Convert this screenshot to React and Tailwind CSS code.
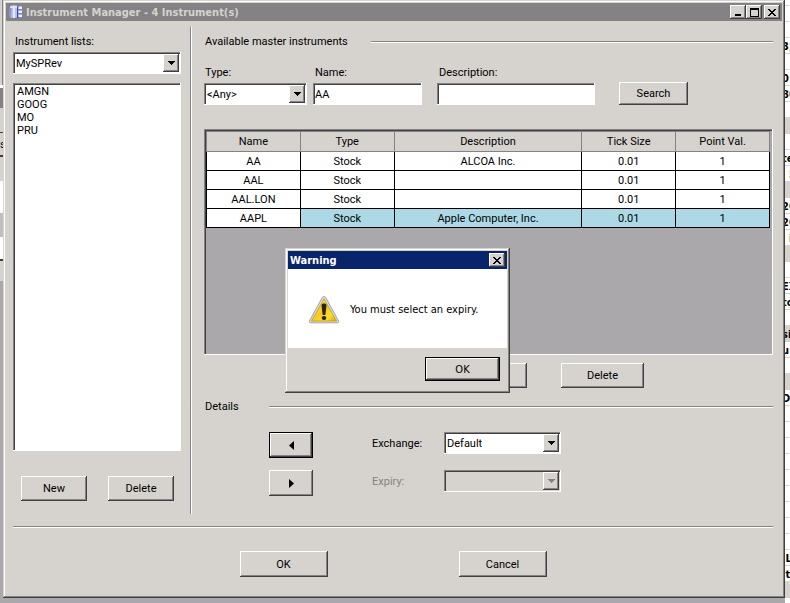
import React, { useState } from 'react';

// classic 3d edges
const RAISED = 'bg-[#d6d3ce] shadow-[inset_-1px_-1px_0_#404040,inset_1px_1px_0_#fff,inset_-2px_-2px_0_#848284]';
const SUNKEN = 'shadow-[inset_-1px_-1px_0_#fff,inset_1px_1px_0_#848284,inset_2px_2px_0_#404040]';
const FOCUSED = 'border border-black bg-[#d6d3ce] shadow-[inset_-1px_-1px_0_#404040,inset_1px_1px_0_#fff,inset_-2px_-2px_0_#848284]';

const instruments = [
    { name: 'AA', type: 'Stock', description: 'ALCOA Inc.', tick: '0.01', point: '1' },
    { name: 'AAL', type: 'Stock', description: '', tick: '0.01', point: '1' },
    { name: 'AAL.LON', type: 'Stock', description: '', tick: '0.01', point: '1' },
    { name: 'AAPL', type: 'Stock', description: 'Apple Computer, Inc.', tick: '0.01', point: '1' }
];

// rows of the sheet that is behind the window, # is a shaded row
const sheetRows = [
    '', '', '3;', '', '0', '80', '', '#', '', 'te', '  5', '#', '20', '20', '  i', '#', '', 'EX', 'to', '',
    '#si', 'u', '', '#', 'D', '', '', '', '', '', '', '', '', '', ' L', ' t', '#'
];

const Button = ({ className, children, focused, ...props }) => (
    <button
        type="button"
        className={`flex items-center justify-center shrink-0 ${focused ? FOCUSED : RAISED} ${className}`}
        {...props}
    >
        {children}
    </button>
);

const Select = ({ id, className, options, disabled }) => (
    <div className={`relative shrink-0 ${className}`}>
        <select
            id={id}
            disabled={disabled}
            className={`block appearance-none w-full h-[22px] pl-[3px] pr-5 outline-none opacity-100 ${SUNKEN} ${disabled ? 'bg-[#d6d3ce]' : 'bg-white'}`}
        >
            {options.map(option => <option key={option}>{option}</option>)}
        </select>
        <span className={`absolute right-[2px] top-[2px] w-4 h-[18px] flex items-center justify-center pointer-events-none ${RAISED}`}>
            <svg width="7" height="4" viewBox="0 0 7 4" shapeRendering="crispEdges">
                <path d="M0 0h7v1H6v1H5v1H4v1H3V3H2V2H1V1H0z" fill={disabled ? '#848284' : '#000'} />
            </svg>
        </span>
    </div>
);

const Line = ({ className }) => (
    <div className={`h-[2px] border-t border-t-[#848284] border-b border-b-white ${className}`}></div>
);

const WarningDialog = ({ onClose }) => (
    <div
        role="dialog"
        aria-label="Warning"
        className="absolute left-[282px] top-[248px] w-[225px] p-[3px] bg-[#d6d3ce] shadow-[inset_-1px_-1px_0_#404040,inset_1px_1px_0_#d6d3ce,inset_-2px_-2px_0_#848284,inset_2px_2px_0_#fff] font-['DejaVu_Sans_Condensed','DejaVu_Sans',sans-serif]"
    >
        <div className="flex items-center justify-between h-[18px] pl-[2px] pr-[2px] bg-[#08246b] text-white">
            <h2 className="font-bold">Warning</h2>
            <Button aria-label="Close" className="w-4 h-[14px]" onClick={onClose}>
                <svg width="8" height="7" viewBox="0 0 8 7" shapeRendering="crispEdges">
                    <path d="M0 0h2v1h1v1h2V1h1V0h2v1H7v1H6v1H5v1h1v1h1v1h1v1H6V6H5V5H3v1H2v1H0V6h1V5h1V4h1V3H2V2H1V1H0z" fill="#000" />
                </svg>
            </Button>
        </div>
        <div className="flex items-center gap-[10px] h-[79px] pt-[2px] pl-5 bg-white">
            <svg width="32" height="29" viewBox="0 0 32 29">
                <defs>
                    <linearGradient id="sign" x1="0" y1="0" x2="1" y2="1">
                        <stop offset="0" stopColor="#f6e58a" />
                        <stop offset="0.5" stopColor="#f5c928" />
                        <stop offset="0.75" stopColor="#fbe02c" />
                        <stop offset="1" stopColor="#dd9a10" />
                    </linearGradient>
                </defs>
                <path d="M16 1.5c.9 0 1.5.5 1.9 1.3L30.6 26c.4 1-.1 1.8-1.100 1.800H2.500c-1 0-1.500-.8-1.100-1.800L14.100 2.800c.4-.8 1-1.300 1.900-1.300z" fill="#d8d8d6" stroke="#a5a5a0" />
                <path d="M16 4L28.500 26h-25z" fill="url(#sign)" stroke="#c99a16" strokeWidth=".8" />
                <path d="M13.500 10.500c0-2.600 5-2.600 5 0l-1.200 9.500h-2.600z" fill="#2b240c" />
                <ellipse cx="16" cy="23" rx="2.300" ry="1.900" fill="#2b240c" />
            </svg>
            <p>You must select an expiry.</p>
        </div>
        <div className="flex justify-end pt-[9px] pr-[7px] pb-[9px]">
            <Button focused className="w-[75px] h-6" onClick={onClose}>OK</Button>
        </div>
    </div>
);

const App = () => {
    const [warning, setWarning] = useState(true);
    const [name, setName] = useState('AA');
    const [description, setDescription] = useState('');

    return (
        <div className="flex min-h-screen overflow-hidden bg-[#aba8ac] text-[11px] leading-[13px] text-black font-[Roboto,Arial,sans-serif]">
            {/* edge of the application at the left */}
            <div className="w-[3px] shrink-0 flex flex-col bg-[#aba8ac]">
                <div className="h-[85px] bg-[#d6d3ce] border-r border-[#848284]"></div>
                <div className="h-[3px] bg-white"></div>
                <div className="h-[20px] bg-[#848284]"></div>
                <div className="h-[25px] bg-[#d6d3ce] border-b border-[#404040]"></div>
                <div className="h-[24px] bg-[#d6d3ce] border-b-2 border-[#404040] overflow-hidden flex items-center">s</div>
                <div className="h-[24px] bg-[#d6d3ce]"></div>
                <div className="h-[32px] bg-white"></div>
                <div className="h-[24px] bg-[#c0bec0]"></div>
                <div className="h-[24px] bg-white border-b-2 border-[#404040]"></div>
                <div className="h-[20px] bg-[#d6d3ce]"></div>
            </div>

            <div className="relative flex-1 min-w-0 mb-[5px] p-[3px] flex flex-col bg-[#d6d3ce] shadow-[inset_-1px_-1px_0_#404040,inset_1px_1px_0_#d6d3ce,inset_-2px_-2px_0_#848284,inset_2px_2px_0_#fff]">
                <div className="flex items-center h-[18px] pl-[3px] pr-[2px] bg-[#848284] text-[#d6d3ce]">
                    <svg width="14" height="14" viewBox="0 0 14 14" className="mr-[3px]">
                        <path d="M1 2l7-1v11.500l-8 .5z" fill="#b9c1f0" />
                        <path d="M1 2h1.500L2 13H0z" fill="#8590d6" />
                        <path d="M4 2h2v11H4z" fill="#e6e9ff" />
                        <path d="M1 1.500C2 .3 7 .3 8.500 1.200V3H1z" fill="#dfe3ff" />
                        <path d="M8 1.500h1.200V13H8z" fill="#3f4a9e" />
                        <path d="M9 1h4v12H9z" fill="#7580c8" />
                        <path d="M9.500 1.500H13V4H9.500zM9.500 5.500H13V8H9.500zM9.500 9.500H13V12H9.500z" fill="#eef0ff" />
                    </svg>
                    <h1 className="flex-1 font-bold font-['DejaVu_Sans_Condensed','DejaVu_Sans',sans-serif] whitespace-nowrap">Instrument Manager - 4 Instrument(s)</h1>
                    <Button aria-label="Minimize" className="w-4 h-[14px]">
                        <svg width="8" height="8" viewBox="0 0 8 8" shapeRendering="crispEdges">
                            <path d="M1 6h6v2H1z" fill="#000" />
                        </svg>
                    </Button>
                    <Button aria-label="Maximize" className="w-4 h-[14px]">
                        <svg width="9" height="9" viewBox="0 0 9 9" shapeRendering="crispEdges">
                            <path d="M0 0h9v9H0zM1 2v6h7V2z" fill="#000" fillRule="evenodd" />
                        </svg>
                    </Button>
                    <Button aria-label="Close" className="w-4 h-[14px] ml-[2px]">
                        <svg width="8" height="7" viewBox="0 0 8 7" shapeRendering="crispEdges">
                            <path d="M0 0h2v1h1v1h2V1h1V0h2v1H7v1H6v1H5v1h1v1h1v1h1v1H6V6H5V5H3v1H2v1H0V6h1V5h1V4h1V3H2V2H1V1H0z" fill="#000" />
                        </svg>
                    </Button>
                </div>

                <div className="flex pl-[7px] pr-[9px] pt-[6px]">
                    {/* lists */}
                    <div className="w-[168px] shrink-0 pt-2">
                        <label htmlFor="lists" className="block pl-[2px] mb-1">Instrument lists:</label>
                        <Select id="lists" options={['MySPRev']} />
                        <select
                            size="4"
                            aria-label="Instruments"
                            className={`block appearance-none w-full h-[368px] mt-[9px] py-[2px] px-[2px] bg-white outline-none overflow-hidden ${SUNKEN}`}
                        >
                            <option className="p-0 pl-[2px] h-[13px] min-h-0">AMGN</option>
                            <option className="p-0 pl-[2px] h-[13px] min-h-0">GOOG</option>
                            <option className="p-0 pl-[2px] h-[13px] min-h-0">MO</option>
                            <option className="p-0 pl-[2px] h-[13px] min-h-0">PRU</option>
                        </select>
                        <div className="flex justify-between pl-2 pr-[7px] mt-[25px]">
                            <Button className="w-[66px] h-[25px]">New</Button>
                            <Button className="w-[66px] h-[25px]">Delete</Button>
                        </div>
                    </div>

                    <div className="w-[2px] h-[487px] ml-[9px] mr-3 shrink-0 border-l border-l-[#848284] border-r border-r-white"></div>

                    {/* master instruments */}
                    <div className="flex-1 min-w-0 pt-2">
                        <div className="flex items-center">
                            <h2 className="w-[167px] pl-[1px]">Available master instruments</h2>
                            <Line className="flex-1" />
                        </div>

                        <div className="flex items-end mt-[18px]">
                            <div className="w-[103px]">
                                <label htmlFor="type" className="block pl-[1px] mb-1">Type:</label>
                                <Select id="type" options={['<Any>']} />
                            </div>
                            <div className="w-[109px] ml-[6px]">
                                <label htmlFor="name" className="block pl-[2px] mb-1">Name:</label>
                                <input
                                    id="name"
                                    type="text"
                                    className={`block w-full h-[22px] px-[2px] bg-white outline-none ${SUNKEN}`}
                                    value={name}
                                    onChange={e => setName(e.target.value)}
                                />
                            </div>
                            <div className="w-[158px] ml-[15px]">
                                <label htmlFor="description" className="block pl-[2px] mb-1">Description:</label>
                                <input
                                    id="description"
                                    type="text"
                                    className={`block w-full h-[22px] px-[2px] bg-white outline-none ${SUNKEN}`}
                                    value={description}
                                    onChange={e => setDescription(e.target.value)}
                                />
                            </div>
                            <Button className="w-[69px] h-[23px] ml-6">Search</Button>
                        </div>

                        <div className={`h-[226px] mt-6 p-[2px] pr-[3px] bg-[#aba8ac] ${SUNKEN}`}>
                            <table className="w-full table-fixed border-collapse text-center">
                                <thead>
                                    <tr className="h-5 bg-[#d6d3ce]">
                                        <th className="w-1/6 p-0 font-normal border border-[#848284]">Name</th>
                                        <th className="w-1/6 p-0 font-normal border border-[#848284]">Type</th>
                                        <th className="w-1/3 p-0 font-normal border border-[#848284]">Description</th>
                                        <th className="w-1/6 p-0 font-normal border border-[#848284]">Tick Size</th>
                                        <th className="w-1/6 p-0 font-normal border border-[#848284]">Point Val.</th>
                                    </tr>
                                </thead>
                                <tbody>
                                    {instruments.map(item => (
                                        <tr key={item.name} className={`h-[19px] ${item.name === 'AAPL' ? 'bg-[#add8e6]' : 'bg-white'}`}>
                                            <td className="p-0 bg-white border border-black">{item.name}</td>
                                            <td className="p-0 border border-black">{item.type}</td>
                                            <td className="p-0 border border-black">{item.description}</td>
                                            <td className="p-0 border border-black">{item.tick}</td>
                                            <td className="p-0 border border-black">{item.point}</td>
                                        </tr>
                                    ))}
                                </tbody>
                            </table>
                        </div>

                        <div className="flex gap-[34px] mt-2 pl-60">
                            <Button className="w-[83px] h-[25px]">Edit</Button>
                            <Button className="w-[83px] h-[25px]">Delete</Button>
                        </div>

                        <div className="flex items-center mt-3">
                            <h2 className="w-[65px] pl-[1px]">Details</h2>
                            <Line className="flex-1" />
                        </div>

                        <div className="flex mt-[19px] pl-[65px]">
                            <div className="flex flex-col gap-3">
                                <Button focused aria-label="Add" className="w-11 h-[26px]">
                                    <svg width="5" height="9" viewBox="0 0 5 9"><path d="M5 0v9L0 4.500z" fill="#000" /></svg>
                                </Button>
                                <Button aria-label="Remove" className="w-11 h-[26px]">
                                    <svg width="5" height="9" viewBox="0 0 5 9"><path d="M0 0v9l5-4.500z" fill="#000" /></svg>
                                </Button>
                            </div>
                            <div className="flex flex-col gap-4 ml-[59px]">
                                <div className="flex items-center">
                                    <label htmlFor="exchange" className="w-[72px]">Exchange:</label>
                                    <Select id="exchange" className="w-[117px]" options={['Default']} />
                                </div>
                                <div className="flex items-center">
                                    <label htmlFor="expiry" className="w-[72px] text-[#848284]">Expiry:</label>
                                    <Select id="expiry" className="w-[117px]" options={['']} disabled />
                                </div>
                            </div>
                        </div>
                    </div>
                </div>

                <Line className="ml-[7px] mr-[9px] mt-3" />

                <div className="flex justify-center gap-[131px] mt-[23px] pr-[2px] pb-[18px]">
                    <Button className="w-[88px] h-[26px]">OK</Button>
                    <Button className="w-[88px] h-[26px]">Cancel</Button>
                </div>

                {warning && <WarningDialog onClose={() => setWarning(false)} />}
            </div>

            {/* sheet at the right */}
            <div className="w-[5px] shrink-0 overflow-hidden bg-white font-bold font-['DejaVu_Sans_Condensed',sans-serif]">
                <div className="h-[6px] border-b border-[#d6d3ce]"></div>
                {sheetRows.map((row, i) => (
                    <div
                        key={i}
                        className={`h-4 pt-[2px] -ml-[3px] border-b border-[#d6d3ce] whitespace-pre ${row.startsWith('#') ? 'bg-[#d6d3ce]' : ''}`}
                    >
                        {row.replace('#', '')}
                    </div>
                ))}
            </div>
        </div>
    );
};

export default App;
